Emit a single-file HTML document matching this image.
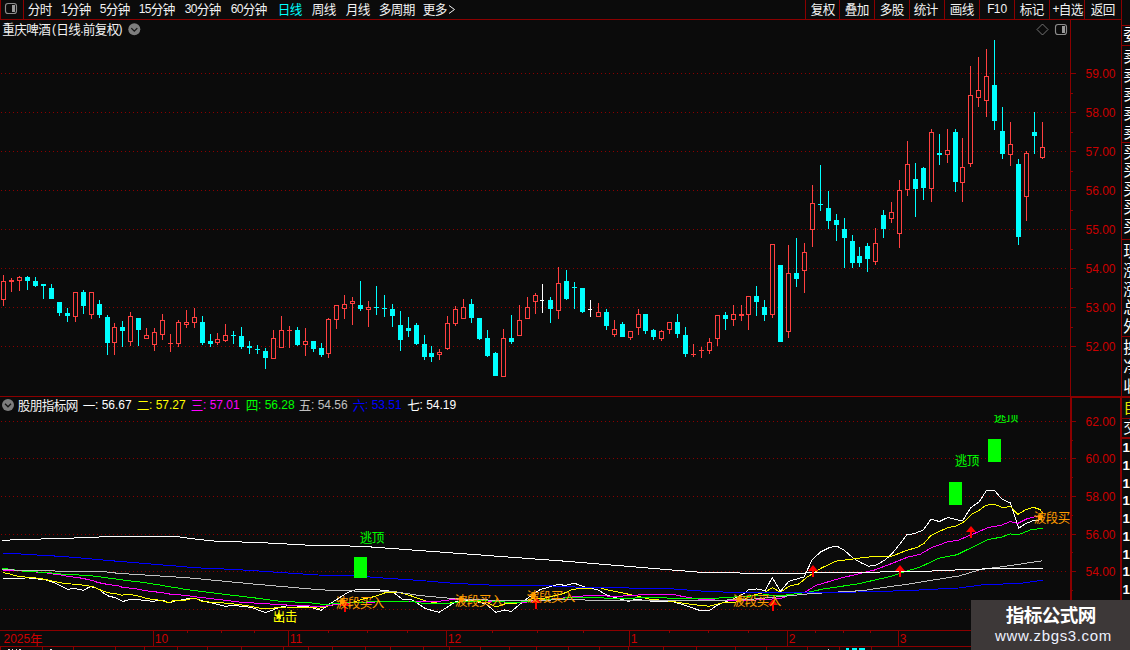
<!DOCTYPE html>
<html lang="zh"><head><meta charset="utf-8"><title>重庆啤酒 日线</title>
<style>
html,body{margin:0;padding:0;background:#0b0b0b;}
body{width:1130px;height:650px;overflow:hidden;font-family:"Liberation Sans","Noto Sans CJK SC",sans-serif;}
svg{display:block;font-family:"Liberation Sans","Noto Sans CJK SC",sans-serif;}
</style></head><body>
<svg role="img" aria-label="重庆啤酒 日线 K线图" width="1130" height="650" viewBox="0 0 1130 650" shape-rendering="crispEdges">
<defs>
<clipPath id="cpInd"><rect x="0" y="415" width="1070" height="215"/></clipPath>
<clipPath id="cpStrip"><rect x="1122" y="0" width="8" height="650"/></clipPath>
</defs>
<rect x="0" y="0" width="1130" height="650" fill="#0b0b0b"/>
<line x1="1" y1="73.5" x2="1066" y2="73.5" stroke="#8b0000" stroke-width="1" stroke-dasharray="1 3"/>
<line x1="1" y1="112.5" x2="1066" y2="112.5" stroke="#8b0000" stroke-width="1" stroke-dasharray="1 3"/>
<line x1="1" y1="151.5" x2="1066" y2="151.5" stroke="#8b0000" stroke-width="1" stroke-dasharray="1 3"/>
<line x1="1" y1="190.5" x2="1066" y2="190.5" stroke="#8b0000" stroke-width="1" stroke-dasharray="1 3"/>
<line x1="1" y1="229.5" x2="1066" y2="229.5" stroke="#8b0000" stroke-width="1" stroke-dasharray="1 3"/>
<line x1="1" y1="268.5" x2="1066" y2="268.5" stroke="#8b0000" stroke-width="1" stroke-dasharray="1 3"/>
<line x1="1" y1="307.5" x2="1066" y2="307.5" stroke="#8b0000" stroke-width="1" stroke-dasharray="1 3"/>
<line x1="1" y1="346.5" x2="1066" y2="346.5" stroke="#8b0000" stroke-width="1" stroke-dasharray="1 3"/>
<line x1="1" y1="421.5" x2="1066" y2="421.5" stroke="#8b0000" stroke-width="1" stroke-dasharray="1 3"/>
<line x1="1" y1="458.5" x2="1066" y2="458.5" stroke="#8b0000" stroke-width="1" stroke-dasharray="1 3"/>
<line x1="1" y1="496.5" x2="1066" y2="496.5" stroke="#8b0000" stroke-width="1" stroke-dasharray="1 3"/>
<line x1="1" y1="534.5" x2="1066" y2="534.5" stroke="#8b0000" stroke-width="1" stroke-dasharray="1 3"/>
<line x1="1" y1="571.5" x2="1066" y2="571.5" stroke="#8b0000" stroke-width="1" stroke-dasharray="1 3"/>
<line x1="1" y1="609.5" x2="1066" y2="609.5" stroke="#8b0000" stroke-width="1" stroke-dasharray="1 3"/>
<g id="candles">
<rect x="3" y="275" width="1" height="6" fill="#ff4040"/>
<rect x="3" y="300" width="1" height="6" fill="#ff4040"/>
<rect x="1.5" y="281.5" width="4" height="18" fill="#0b0b0b" stroke="#ff4040" stroke-width="1"/>
<rect x="11" y="278" width="1" height="14" fill="#ff4040"/>
<rect x="9" y="280" width="5" height="2" fill="#ff4040"/>
<rect x="19" y="276" width="1" height="1" fill="#ff4040"/>
<rect x="19" y="281" width="1" height="10" fill="#ff4040"/>
<rect x="17.5" y="277.5" width="4" height="3" fill="#0b0b0b" stroke="#ff4040" stroke-width="1"/>
<rect x="27" y="276" width="1" height="14" fill="#00ffff"/>
<rect x="25" y="277" width="5" height="4" fill="#00ffff"/>
<rect x="35" y="277" width="1" height="10" fill="#00ffff"/>
<rect x="33" y="281" width="5" height="5" fill="#00ffff"/>
<rect x="43" y="284" width="1" height="15" fill="#00ffff"/>
<rect x="41" y="284" width="5" height="2" fill="#00ffff"/>
<rect x="51" y="284" width="1" height="15" fill="#00ffff"/>
<rect x="49" y="288" width="5" height="11" fill="#00ffff"/>
<rect x="59" y="302" width="1" height="14" fill="#00ffff"/>
<rect x="57" y="302" width="5" height="11" fill="#00ffff"/>
<rect x="67" y="308" width="1" height="14" fill="#00ffff"/>
<rect x="65" y="313" width="5" height="3" fill="#00ffff"/>
<rect x="75" y="317" width="1" height="5" fill="#ff4040"/>
<rect x="73.5" y="292.5" width="4" height="24" fill="#0b0b0b" stroke="#ff4040" stroke-width="1"/>
<rect x="83" y="290" width="1" height="24" fill="#00ffff"/>
<rect x="81" y="292" width="5" height="14" fill="#00ffff"/>
<rect x="91" y="315" width="1" height="4" fill="#ff4040"/>
<rect x="89.5" y="292.5" width="4" height="22" fill="#0b0b0b" stroke="#ff4040" stroke-width="1"/>
<rect x="99" y="300" width="1" height="18" fill="#00ffff"/>
<rect x="97" y="304" width="5" height="11" fill="#00ffff"/>
<rect x="107" y="315" width="1" height="40" fill="#00ffff"/>
<rect x="105" y="317" width="5" height="26" fill="#00ffff"/>
<rect x="114" y="323" width="1" height="4" fill="#ff4040"/>
<rect x="114" y="343" width="1" height="12" fill="#ff4040"/>
<rect x="112.5" y="327.5" width="4" height="15" fill="#0b0b0b" stroke="#ff4040" stroke-width="1"/>
<rect x="122" y="321" width="1" height="26" fill="#00ffff"/>
<rect x="120" y="327" width="5" height="4" fill="#00ffff"/>
<rect x="130" y="312" width="1" height="4" fill="#ff4040"/>
<rect x="130" y="342" width="1" height="4" fill="#ff4040"/>
<rect x="128.5" y="316.5" width="4" height="25" fill="#0b0b0b" stroke="#ff4040" stroke-width="1"/>
<rect x="138" y="318" width="1" height="28" fill="#00ffff"/>
<rect x="136" y="318" width="5" height="12" fill="#00ffff"/>
<rect x="146" y="328" width="1" height="7" fill="#ff4040"/>
<rect x="144.5" y="335.5" width="4" height="3" fill="#0b0b0b" stroke="#ff4040" stroke-width="1"/>
<rect x="154" y="328" width="1" height="4" fill="#ff4040"/>
<rect x="154" y="345" width="1" height="6" fill="#ff4040"/>
<rect x="152.5" y="332.5" width="4" height="12" fill="#0b0b0b" stroke="#ff4040" stroke-width="1"/>
<rect x="162" y="314" width="1" height="6" fill="#ff4040"/>
<rect x="162" y="335" width="1" height="5" fill="#ff4040"/>
<rect x="160.5" y="320.5" width="4" height="14" fill="#0b0b0b" stroke="#ff4040" stroke-width="1"/>
<rect x="170" y="334" width="1" height="18" fill="#ff4040"/>
<rect x="168" y="343" width="5" height="1" fill="#ff4040"/>
<rect x="178" y="320" width="1" height="2" fill="#ff4040"/>
<rect x="178" y="344" width="1" height="3" fill="#ff4040"/>
<rect x="176.5" y="322.5" width="4" height="21" fill="#0b0b0b" stroke="#ff4040" stroke-width="1"/>
<rect x="186" y="310" width="1" height="12" fill="#ff4040"/>
<rect x="186" y="325" width="1" height="3" fill="#ff4040"/>
<rect x="184.5" y="322.5" width="4" height="2" fill="#0b0b0b" stroke="#ff4040" stroke-width="1"/>
<rect x="194" y="308" width="1" height="9" fill="#ff4040"/>
<rect x="194" y="323" width="1" height="5" fill="#ff4040"/>
<rect x="192.5" y="317.5" width="4" height="5" fill="#0b0b0b" stroke="#ff4040" stroke-width="1"/>
<rect x="202" y="316" width="1" height="29" fill="#00ffff"/>
<rect x="200" y="322" width="5" height="21" fill="#00ffff"/>
<rect x="210" y="334" width="1" height="13" fill="#00ffff"/>
<rect x="208" y="341" width="5" height="3" fill="#00ffff"/>
<rect x="217" y="333" width="1" height="6" fill="#ff4040"/>
<rect x="217" y="343" width="1" height="2" fill="#ff4040"/>
<rect x="215.5" y="339.5" width="4" height="3" fill="#0b0b0b" stroke="#ff4040" stroke-width="1"/>
<rect x="225" y="324" width="1" height="11" fill="#ff4040"/>
<rect x="225" y="341" width="1" height="1" fill="#ff4040"/>
<rect x="223.5" y="335.5" width="4" height="5" fill="#0b0b0b" stroke="#ff4040" stroke-width="1"/>
<rect x="233" y="331" width="1" height="13" fill="#00ffff"/>
<rect x="231" y="335" width="5" height="1" fill="#00ffff"/>
<rect x="241" y="327" width="1" height="22" fill="#00ffff"/>
<rect x="239" y="336" width="5" height="11" fill="#00ffff"/>
<rect x="249" y="341" width="1" height="13" fill="#00ffff"/>
<rect x="247" y="346" width="5" height="2" fill="#00ffff"/>
<rect x="257" y="345" width="1" height="9" fill="#00ffff"/>
<rect x="255" y="349" width="5" height="1" fill="#00ffff"/>
<rect x="265" y="348" width="1" height="21" fill="#00ffff"/>
<rect x="263" y="351" width="5" height="7" fill="#00ffff"/>
<rect x="273" y="330" width="1" height="8" fill="#ff4040"/>
<rect x="271.5" y="338.5" width="4" height="20" fill="#0b0b0b" stroke="#ff4040" stroke-width="1"/>
<rect x="281" y="316" width="1" height="14" fill="#ff4040"/>
<rect x="279.5" y="330.5" width="4" height="17" fill="#0b0b0b" stroke="#ff4040" stroke-width="1"/>
<rect x="289" y="326" width="1" height="22" fill="#ff4040"/>
<rect x="287" y="330" width="5" height="1" fill="#ff4040"/>
<rect x="297" y="327" width="1" height="19" fill="#00ffff"/>
<rect x="295" y="330" width="5" height="15" fill="#00ffff"/>
<rect x="305" y="328" width="1" height="13" fill="#ff4040"/>
<rect x="305" y="345" width="1" height="11" fill="#ff4040"/>
<rect x="303.5" y="341.5" width="4" height="3" fill="#0b0b0b" stroke="#ff4040" stroke-width="1"/>
<rect x="313" y="341" width="1" height="11" fill="#00ffff"/>
<rect x="311" y="341" width="5" height="8" fill="#00ffff"/>
<rect x="321" y="343" width="1" height="14" fill="#00ffff"/>
<rect x="319" y="348" width="5" height="7" fill="#00ffff"/>
<rect x="328" y="318" width="1" height="1" fill="#ff4040"/>
<rect x="328" y="354" width="1" height="4" fill="#ff4040"/>
<rect x="326.5" y="319.5" width="4" height="34" fill="#0b0b0b" stroke="#ff4040" stroke-width="1"/>
<rect x="336" y="320" width="1" height="9" fill="#ff4040"/>
<rect x="334.5" y="305.5" width="4" height="14" fill="#0b0b0b" stroke="#ff4040" stroke-width="1"/>
<rect x="344" y="295" width="1" height="9" fill="#ff4040"/>
<rect x="344" y="309" width="1" height="10" fill="#ff4040"/>
<rect x="342.5" y="304.5" width="4" height="4" fill="#0b0b0b" stroke="#ff4040" stroke-width="1"/>
<rect x="352" y="297" width="1" height="4" fill="#ff4040"/>
<rect x="352" y="304" width="1" height="21" fill="#ff4040"/>
<rect x="350.5" y="301.5" width="4" height="2" fill="#0b0b0b" stroke="#ff4040" stroke-width="1"/>
<rect x="360" y="281" width="1" height="30" fill="#00ffff"/>
<rect x="358" y="305" width="5" height="4" fill="#00ffff"/>
<rect x="368" y="301" width="1" height="6" fill="#ff4040"/>
<rect x="368" y="310" width="1" height="17" fill="#ff4040"/>
<rect x="366.5" y="307.5" width="4" height="2" fill="#0b0b0b" stroke="#ff4040" stroke-width="1"/>
<rect x="376" y="286" width="1" height="29" fill="#00ffff"/>
<rect x="374" y="307" width="5" height="1" fill="#00ffff"/>
<rect x="384" y="295" width="1" height="22" fill="#00ffff"/>
<rect x="382" y="308" width="5" height="1" fill="#00ffff"/>
<rect x="392" y="304" width="1" height="23" fill="#00ffff"/>
<rect x="390" y="309" width="5" height="7" fill="#00ffff"/>
<rect x="400" y="311" width="1" height="40" fill="#00ffff"/>
<rect x="398" y="325" width="5" height="15" fill="#00ffff"/>
<rect x="408" y="317" width="1" height="20" fill="#00ffff"/>
<rect x="406" y="328" width="5" height="3" fill="#00ffff"/>
<rect x="416" y="323" width="1" height="22" fill="#00ffff"/>
<rect x="414" y="325" width="5" height="19" fill="#00ffff"/>
<rect x="424" y="335" width="1" height="25" fill="#00ffff"/>
<rect x="422" y="344" width="5" height="13" fill="#00ffff"/>
<rect x="431" y="346" width="1" height="16" fill="#00ffff"/>
<rect x="429" y="353" width="5" height="4" fill="#00ffff"/>
<rect x="439" y="349" width="1" height="3" fill="#ff4040"/>
<rect x="439" y="355" width="1" height="5" fill="#ff4040"/>
<rect x="437.5" y="352.5" width="4" height="2" fill="#0b0b0b" stroke="#ff4040" stroke-width="1"/>
<rect x="447" y="316" width="1" height="7" fill="#ff4040"/>
<rect x="447" y="349" width="1" height="1" fill="#ff4040"/>
<rect x="445.5" y="323.5" width="4" height="25" fill="#0b0b0b" stroke="#ff4040" stroke-width="1"/>
<rect x="455" y="306" width="1" height="3" fill="#ff4040"/>
<rect x="455" y="324" width="1" height="2" fill="#ff4040"/>
<rect x="453.5" y="309.5" width="4" height="14" fill="#0b0b0b" stroke="#ff4040" stroke-width="1"/>
<rect x="463" y="299" width="1" height="8" fill="#ff4040"/>
<rect x="461.5" y="307.5" width="4" height="11" fill="#0b0b0b" stroke="#ff4040" stroke-width="1"/>
<rect x="471" y="299" width="1" height="24" fill="#00ffff"/>
<rect x="469" y="304" width="5" height="14" fill="#00ffff"/>
<rect x="479" y="318" width="1" height="22" fill="#00ffff"/>
<rect x="477" y="318" width="5" height="21" fill="#00ffff"/>
<rect x="487" y="330" width="1" height="27" fill="#00ffff"/>
<rect x="485" y="338" width="5" height="18" fill="#00ffff"/>
<rect x="495" y="352" width="1" height="24" fill="#00ffff"/>
<rect x="493" y="353" width="5" height="23" fill="#00ffff"/>
<rect x="503" y="329" width="1" height="9" fill="#ff4040"/>
<rect x="501.5" y="338.5" width="4" height="38" fill="#0b0b0b" stroke="#ff4040" stroke-width="1"/>
<rect x="511" y="315" width="1" height="29" fill="#00ffff"/>
<rect x="509" y="338" width="5" height="4" fill="#00ffff"/>
<rect x="519" y="305" width="1" height="15" fill="#ff4040"/>
<rect x="517.5" y="320.5" width="4" height="15" fill="#0b0b0b" stroke="#ff4040" stroke-width="1"/>
<rect x="527" y="297" width="1" height="10" fill="#ff4040"/>
<rect x="525.5" y="307.5" width="4" height="11" fill="#0b0b0b" stroke="#ff4040" stroke-width="1"/>
<rect x="535" y="293" width="1" height="2" fill="#ff4040"/>
<rect x="535" y="302" width="1" height="12" fill="#ff4040"/>
<rect x="533.5" y="295.5" width="4" height="6" fill="#0b0b0b" stroke="#ff4040" stroke-width="1"/>
<rect x="542" y="284" width="1" height="29" fill="#ffffff"/>
<rect x="540" y="300" width="4" height="1" fill="#ffffff"/>
<rect x="550" y="297" width="1" height="26" fill="#00ffff"/>
<rect x="548" y="300" width="5" height="9" fill="#00ffff"/>
<rect x="558" y="267" width="1" height="16" fill="#ff4040"/>
<rect x="558" y="311" width="1" height="8" fill="#ff4040"/>
<rect x="556.5" y="283.5" width="4" height="27" fill="#0b0b0b" stroke="#ff4040" stroke-width="1"/>
<rect x="566" y="270" width="1" height="30" fill="#00ffff"/>
<rect x="564" y="281" width="5" height="18" fill="#00ffff"/>
<rect x="574" y="282" width="1" height="27" fill="#00ffff"/>
<rect x="572" y="287" width="5" height="1" fill="#00ffff"/>
<rect x="582" y="288" width="1" height="25" fill="#00ffff"/>
<rect x="580" y="288" width="5" height="24" fill="#00ffff"/>
<rect x="590" y="300" width="1" height="17" fill="#ffffff"/>
<rect x="588" y="309" width="4" height="1" fill="#ffffff"/>
<rect x="598" y="303" width="1" height="9" fill="#ff4040"/>
<rect x="596.5" y="312.5" width="4" height="4" fill="#0b0b0b" stroke="#ff4040" stroke-width="1"/>
<rect x="606" y="309" width="1" height="21" fill="#00ffff"/>
<rect x="604" y="312" width="5" height="14" fill="#00ffff"/>
<rect x="614" y="320" width="1" height="9" fill="#ff4040"/>
<rect x="614" y="335" width="1" height="2" fill="#ff4040"/>
<rect x="612.5" y="329.5" width="4" height="5" fill="#0b0b0b" stroke="#ff4040" stroke-width="1"/>
<rect x="622" y="322" width="1" height="15" fill="#00ffff"/>
<rect x="620" y="324" width="5" height="13" fill="#00ffff"/>
<rect x="630" y="338" width="1" height="2" fill="#ff4040"/>
<rect x="628.5" y="331.5" width="4" height="6" fill="#0b0b0b" stroke="#ff4040" stroke-width="1"/>
<rect x="638" y="309" width="1" height="5" fill="#ff4040"/>
<rect x="638" y="328" width="1" height="7" fill="#ff4040"/>
<rect x="636.5" y="314.5" width="4" height="13" fill="#0b0b0b" stroke="#ff4040" stroke-width="1"/>
<rect x="645" y="314" width="1" height="20" fill="#00ffff"/>
<rect x="643" y="314" width="5" height="17" fill="#00ffff"/>
<rect x="653" y="329" width="1" height="11" fill="#00ffff"/>
<rect x="651" y="330" width="5" height="7" fill="#00ffff"/>
<rect x="661" y="330" width="1" height="1" fill="#ff4040"/>
<rect x="661" y="339" width="1" height="2" fill="#ff4040"/>
<rect x="659.5" y="331.5" width="4" height="7" fill="#0b0b0b" stroke="#ff4040" stroke-width="1"/>
<rect x="669" y="330" width="1" height="4" fill="#ff4040"/>
<rect x="667.5" y="322.5" width="4" height="7" fill="#0b0b0b" stroke="#ff4040" stroke-width="1"/>
<rect x="677" y="314" width="1" height="24" fill="#00ffff"/>
<rect x="675" y="322" width="5" height="12" fill="#00ffff"/>
<rect x="685" y="327" width="1" height="30" fill="#00ffff"/>
<rect x="683" y="335" width="5" height="19" fill="#00ffff"/>
<rect x="693" y="344" width="1" height="13" fill="#ff4040"/>
<rect x="691" y="354" width="5" height="1" fill="#ff4040"/>
<rect x="701" y="347" width="1" height="11" fill="#ff4040"/>
<rect x="699" y="350" width="5" height="1" fill="#ff4040"/>
<rect x="709" y="338" width="1" height="4" fill="#ff4040"/>
<rect x="709" y="351" width="1" height="3" fill="#ff4040"/>
<rect x="707.5" y="342.5" width="4" height="8" fill="#0b0b0b" stroke="#ff4040" stroke-width="1"/>
<rect x="717" y="339" width="1" height="7" fill="#ff4040"/>
<rect x="715.5" y="315.5" width="4" height="23" fill="#0b0b0b" stroke="#ff4040" stroke-width="1"/>
<rect x="725" y="312" width="1" height="18" fill="#00ffff"/>
<rect x="723" y="315" width="5" height="4" fill="#00ffff"/>
<rect x="733" y="305" width="1" height="9" fill="#ff4040"/>
<rect x="733" y="320" width="1" height="6" fill="#ff4040"/>
<rect x="731.5" y="314.5" width="4" height="5" fill="#0b0b0b" stroke="#ff4040" stroke-width="1"/>
<rect x="741" y="305" width="1" height="16" fill="#ff4040"/>
<rect x="739" y="314" width="5" height="2" fill="#ff4040"/>
<rect x="748" y="315" width="1" height="15" fill="#ff4040"/>
<rect x="746.5" y="296.5" width="4" height="18" fill="#0b0b0b" stroke="#ff4040" stroke-width="1"/>
<rect x="756" y="286" width="1" height="30" fill="#00ffff"/>
<rect x="754" y="296" width="5" height="6" fill="#00ffff"/>
<rect x="764" y="300" width="1" height="21" fill="#00ffff"/>
<rect x="762" y="307" width="5" height="8" fill="#00ffff"/>
<rect x="772" y="315" width="1" height="3" fill="#ff4040"/>
<rect x="770.5" y="244.5" width="4" height="70" fill="#0b0b0b" stroke="#ff4040" stroke-width="1"/>
<rect x="780" y="265" width="1" height="77" fill="#00ffff"/>
<rect x="778" y="265" width="5" height="77" fill="#00ffff"/>
<rect x="788" y="245" width="1" height="28" fill="#ff4040"/>
<rect x="788" y="332" width="1" height="6" fill="#ff4040"/>
<rect x="786.5" y="273.5" width="4" height="58" fill="#0b0b0b" stroke="#ff4040" stroke-width="1"/>
<rect x="796" y="238" width="1" height="49" fill="#00ffff"/>
<rect x="794" y="273" width="5" height="6" fill="#00ffff"/>
<rect x="804" y="243" width="1" height="9" fill="#ff4040"/>
<rect x="804" y="271" width="1" height="22" fill="#ff4040"/>
<rect x="802.5" y="252.5" width="4" height="18" fill="#0b0b0b" stroke="#ff4040" stroke-width="1"/>
<rect x="812" y="185" width="1" height="18" fill="#ff4040"/>
<rect x="812" y="230" width="1" height="17" fill="#ff4040"/>
<rect x="810.5" y="203.5" width="4" height="26" fill="#0b0b0b" stroke="#ff4040" stroke-width="1"/>
<rect x="820" y="165" width="1" height="46" fill="#00ffff"/>
<rect x="818" y="204" width="5" height="1" fill="#00ffff"/>
<rect x="828" y="191" width="1" height="38" fill="#00ffff"/>
<rect x="826" y="208" width="5" height="13" fill="#00ffff"/>
<rect x="836" y="214" width="1" height="27" fill="#00ffff"/>
<rect x="834" y="220" width="5" height="5" fill="#00ffff"/>
<rect x="844" y="218" width="1" height="50" fill="#00ffff"/>
<rect x="842" y="229" width="5" height="9" fill="#00ffff"/>
<rect x="852" y="235" width="1" height="33" fill="#00ffff"/>
<rect x="850" y="241" width="5" height="22" fill="#00ffff"/>
<rect x="859" y="247" width="1" height="20" fill="#00ffff"/>
<rect x="857" y="256" width="5" height="7" fill="#00ffff"/>
<rect x="867" y="243" width="1" height="29" fill="#00ffff"/>
<rect x="865" y="246" width="5" height="13" fill="#00ffff"/>
<rect x="875" y="228" width="1" height="15" fill="#ff4040"/>
<rect x="875" y="262" width="1" height="3" fill="#ff4040"/>
<rect x="873.5" y="243.5" width="4" height="18" fill="#0b0b0b" stroke="#ff4040" stroke-width="1"/>
<rect x="883" y="210" width="1" height="28" fill="#00ffff"/>
<rect x="881" y="215" width="5" height="14" fill="#00ffff"/>
<rect x="891" y="202" width="1" height="10" fill="#ff4040"/>
<rect x="891" y="219" width="1" height="4" fill="#ff4040"/>
<rect x="889.5" y="212.5" width="4" height="6" fill="#0b0b0b" stroke="#ff4040" stroke-width="1"/>
<rect x="899" y="180" width="1" height="10" fill="#ff4040"/>
<rect x="899" y="234" width="1" height="14" fill="#ff4040"/>
<rect x="897.5" y="190.5" width="4" height="43" fill="#0b0b0b" stroke="#ff4040" stroke-width="1"/>
<rect x="907" y="141" width="1" height="23" fill="#ff4040"/>
<rect x="907" y="190" width="1" height="6" fill="#ff4040"/>
<rect x="905.5" y="164.5" width="4" height="25" fill="#0b0b0b" stroke="#ff4040" stroke-width="1"/>
<rect x="915" y="163" width="1" height="54" fill="#00ffff"/>
<rect x="913" y="179" width="5" height="10" fill="#00ffff"/>
<rect x="923" y="167" width="1" height="33" fill="#00ffff"/>
<rect x="921" y="168" width="5" height="20" fill="#00ffff"/>
<rect x="931" y="129" width="1" height="3" fill="#ff4040"/>
<rect x="931" y="189" width="1" height="13" fill="#ff4040"/>
<rect x="929.5" y="132.5" width="4" height="56" fill="#0b0b0b" stroke="#ff4040" stroke-width="1"/>
<rect x="939" y="134" width="1" height="31" fill="#00ffff"/>
<rect x="937" y="153" width="5" height="2" fill="#00ffff"/>
<rect x="947" y="129" width="1" height="21" fill="#ff4040"/>
<rect x="947" y="155" width="1" height="8" fill="#ff4040"/>
<rect x="945.5" y="150.5" width="4" height="4" fill="#0b0b0b" stroke="#ff4040" stroke-width="1"/>
<rect x="955" y="129" width="1" height="63" fill="#00ffff"/>
<rect x="953" y="132" width="5" height="50" fill="#00ffff"/>
<rect x="962" y="138" width="1" height="29" fill="#ff4040"/>
<rect x="962" y="183" width="1" height="19" fill="#ff4040"/>
<rect x="960.5" y="167.5" width="4" height="15" fill="#0b0b0b" stroke="#ff4040" stroke-width="1"/>
<rect x="970" y="66" width="1" height="29" fill="#ff4040"/>
<rect x="970" y="164" width="1" height="3" fill="#ff4040"/>
<rect x="968.5" y="95.5" width="4" height="68" fill="#0b0b0b" stroke="#ff4040" stroke-width="1"/>
<rect x="978" y="57" width="1" height="33" fill="#ff4040"/>
<rect x="978" y="98" width="1" height="9" fill="#ff4040"/>
<rect x="976.5" y="90.5" width="4" height="7" fill="#0b0b0b" stroke="#ff4040" stroke-width="1"/>
<rect x="986" y="49" width="1" height="27" fill="#ff4040"/>
<rect x="986" y="101" width="1" height="16" fill="#ff4040"/>
<rect x="984.5" y="76.5" width="4" height="24" fill="#0b0b0b" stroke="#ff4040" stroke-width="1"/>
<rect x="994" y="40" width="1" height="90" fill="#00ffff"/>
<rect x="992" y="85" width="5" height="36" fill="#00ffff"/>
<rect x="1002" y="107" width="1" height="52" fill="#00ffff"/>
<rect x="1000" y="131" width="5" height="23" fill="#00ffff"/>
<rect x="1010" y="122" width="1" height="22" fill="#ff4040"/>
<rect x="1010" y="155" width="1" height="11" fill="#ff4040"/>
<rect x="1008.5" y="144.5" width="4" height="10" fill="#0b0b0b" stroke="#ff4040" stroke-width="1"/>
<rect x="1018" y="159" width="1" height="86" fill="#00ffff"/>
<rect x="1016" y="164" width="5" height="73" fill="#00ffff"/>
<rect x="1026" y="151" width="1" height="2" fill="#ff4040"/>
<rect x="1026" y="197" width="1" height="24" fill="#ff4040"/>
<rect x="1024.5" y="153.5" width="4" height="43" fill="#0b0b0b" stroke="#ff4040" stroke-width="1"/>
<rect x="1034" y="112" width="1" height="42" fill="#00ffff"/>
<rect x="1032" y="132" width="5" height="4" fill="#00ffff"/>
<rect x="1042" y="122" width="1" height="25" fill="#ff4040"/>
<rect x="1042" y="158" width="1" height="1" fill="#ff4040"/>
<rect x="1040.5" y="147.5" width="4" height="10" fill="#0b0b0b" stroke="#ff4040" stroke-width="1"/>
</g>
<g id="indicator" clip-path="url(#cpInd)">
<polyline points="3.0,578.5 22.7,578.5 27.0,577.5 32.0,578.5 45.4,579.6 51.0,581.7 56.0,583.5 60.0,585.5 63.5,587.2 68.0,589.4 74.0,588.4 79.5,589.4 83.0,590.4 86.0,588.9 90.0,586.7 95.0,587.5 99.0,589.4 102.0,591.9 105.5,594.3 109.0,596.3 114.0,597.3 118.0,599.0 121.0,600.3 123.0,601.7 126.0,600.3 134.0,599.2 143.0,600.2 152.0,601.3 163.0,600.3 170.0,603.0 174.5,601.0 179.5,600.2 185.0,599.2 191.7,598.3 196.8,599.0 201.8,600.7 215.0,603.7 225.4,606.5 230.4,605.4 245.5,606.5 252.0,607.7 265.0,612.4 269.0,611.6 279.0,607.4 289.0,605.4 309.4,607.0 321.0,610.4 325.4,607.0 329.6,604.0 348.0,592.3 356.5,589.4 375.0,589.4 392.0,591.4 402.0,599.0 412.0,599.8 425.5,608.6 439.0,612.4 450.7,604.9 455.8,601.5 470.0,600.0 486.0,604.0 496.0,612.4 504.5,610.0 511.0,611.6 526.4,599.0 540.0,589.7 555.0,585.2 558.4,584.2 565.0,585.5 574.3,583.3 580.0,585.2 588.6,588.4 597.0,589.4 605.4,594.3 613.9,597.3 629.0,601.5 635.7,599.0 649.0,601.0 672.7,601.5 686.0,605.7 699.6,610.4 709.7,610.4 716.4,605.7 723.0,602.7 733.0,599.0 745.0,593.0 748.4,589.7 756.8,588.9 765.0,590.6 772.3,577.5 780.4,591.4 788.8,581.3 804.0,577.0 812.3,559.5 820.7,551.9 829.0,547.7 836.7,546.0 844.3,550.2 852.7,557.8 861.0,562.8 868.6,566.2 876.2,565.0 884.6,560.3 891.3,554.4 899.7,544.3 906.5,535.0 915.0,533.4 923.3,530.0 931.0,519.3 939.4,521.5 947.7,517.5 962.4,521.0 970.7,507.7 979.0,502.0 986.4,490.7 994.7,490.7 1001.2,498.5 1010.4,503.0 1018.7,528.3 1026.0,523.4 1033.5,520.6 1042.0,519.7" fill="none" stroke="#ffffff" stroke-width="1" stroke-linejoin="round" stroke-linecap="square"/>
<polyline points="3.0,572.6 7.5,573.4 11.0,574.4 14.3,575.4 18.5,576.5 32.0,577.5 40.0,578.5 45.4,579.6 50.0,580.5 54.6,581.5 59.0,582.5 64.7,583.5 78.0,584.5 83.0,585.2 92.5,586.5 97.5,588.6 101.7,590.6 106.8,592.3 111.8,593.3 118.5,594.3 122.0,595.3 126.0,594.3 135.4,595.3 140.4,596.6 145.5,598.3 152.0,599.3 160.0,600.3 166.5,602.0 170.2,603.0 172.4,601.0 177.4,600.2 185.0,600.2 191.7,598.6 196.8,599.0 201.8,601.5 227.0,603.2 245.5,605.4 252.0,606.5 264.0,609.0 272.4,608.2 286.0,607.0 309.4,607.4 319.5,608.2 326.0,606.5 336.0,604.4 353.0,602.3 363.0,599.0 375.0,596.5 385.0,592.8 397.0,591.9 410.4,595.6 425.5,601.0 440.6,603.7 454.0,602.7 470.0,601.0 487.7,602.7 496.0,607.0 504.5,604.0 521.0,602.7 531.4,599.0 545.0,598.0 555.0,595.6 561.7,594.3 571.8,589.7 578.5,588.6 600.4,587.6 605.4,589.4 622.0,592.8 639.0,596.5 649.0,599.0 672.7,601.5 682.8,603.2 699.6,605.4 709.7,606.2 723.0,602.7 736.6,602.0 745.0,599.0 750.0,596.0 765.0,592.3 772.3,587.6 780.4,592.3 788.8,586.4 798.9,583.9 807.3,577.0 820.7,568.4 835.8,561.2 849.3,559.5 861.0,557.8 874.5,556.4 891.3,556.4 908.0,549.9 916.6,547.7 923.7,543.7 931.0,535.4 947.7,527.6 957.0,525.8 964.3,521.5 971.7,514.1 979.0,510.4 985.5,505.5 993.8,504.0 1003.0,507.7 1010.4,506.4 1017.8,514.5 1026.0,509.5 1033.5,507.3 1040.0,509.5 1042.0,512.3" fill="none" stroke="#ffff00" stroke-width="1" stroke-linejoin="round" stroke-linecap="square"/>
<polyline points="3.0,570.4 16.0,570.4 46.0,572.8 56.0,574.4 64.0,575.4 67.0,576.5 78.0,577.5 83.0,578.5 88.0,579.5 93.0,580.8 98.0,582.5 103.0,583.5 108.0,584.5 118.5,585.9 122.0,587.2 134.0,588.6 139.0,589.4 144.0,590.4 151.0,591.4 160.0,592.4 166.5,593.4 171.0,594.3 185.0,595.3 196.8,597.0 218.6,599.5 238.8,602.0 264.0,603.7 294.3,605.4 323.0,606.5 333.0,604.9 353.0,602.7 375.0,602.0 412.0,601.0 440.6,601.0 457.4,599.0 474.0,599.0 491.0,601.5 521.0,602.7 538.0,600.7 560.0,598.3 571.8,597.0 587.0,595.6 602.0,595.3 610.5,596.5 634.0,595.6 642.4,594.3 672.7,594.3 682.8,596.5 698.0,599.0 713.0,599.8 723.0,601.0 745.0,600.7 780.4,598.5 792.0,594.3 804.0,592.8 815.7,585.5 841.0,578.0 861.0,573.3 874.5,570.0 891.3,563.7 908.0,557.0 920.0,554.4 931.0,547.9 947.7,541.8 958.8,540.0 988.3,527.6 1001.2,525.2 1010.4,521.5 1017.8,523.4 1027.0,518.8 1038.0,516.0 1042.0,516.0" fill="none" stroke="#ff00ff" stroke-width="1" stroke-linejoin="round" stroke-linecap="square"/>
<polyline points="3.0,568.5 8.0,569.0 17.0,570.4 24.0,571.2 48.0,572.6 56.0,573.4 64.0,574.4 88.0,575.4 97.0,576.5 104.0,577.5 112.0,578.5 119.0,579.5 127.0,580.5 135.0,581.5 144.0,582.5 151.0,583.7 159.0,584.7 167.0,586.5 175.0,587.5 185.0,589.4 218.6,593.6 254.0,597.8 279.0,601.2 309.4,602.7 319.5,604.0 329.6,604.0 353.0,602.7 375.0,601.5 410.0,601.0 422.0,603.2 450.7,603.2 460.8,601.5 487.7,600.7 504.5,602.0 521.0,602.0 538.0,600.3 560.0,598.3 571.8,597.6 602.0,597.3 605.4,598.6 656.0,597.6 682.8,598.6 713.0,599.0 721.5,597.6 745.0,596.5 765.0,594.8 782.0,595.6 807.3,592.3 824.0,588.9 857.7,583.9 891.3,576.3 908.0,570.7 920.0,567.1 938.5,558.4 957.0,554.7 988.3,539.4 1001.2,537.2 1010.4,533.9 1017.8,535.0 1030.7,529.8 1042.0,528.3" fill="none" stroke="#00ff00" stroke-width="1" stroke-linejoin="round" stroke-linecap="square"/>
<polyline points="3.0,569.6 24.0,570.4 64.0,571.2 103.0,571.6 119.0,573.4 135.0,574.4 151.0,575.4 167.0,576.5 185.0,577.5 252.0,583.9 309.4,588.9 333.0,590.6 375.0,591.4 392.0,591.4 420.4,595.6 454.0,598.6 504.5,600.7 538.0,600.7 560.0,599.5 600.0,600.3 700.0,600.3 745.0,599.8 782.0,596.5 807.0,594.0 832.5,592.3 862.7,590.6 891.0,586.4 908.0,584.2 930.0,580.5 958.8,576.0 981.0,569.5 1012.3,565.3 1042.0,560.8" fill="none" stroke="#c0c0c0" stroke-width="1" stroke-linejoin="round" stroke-linecap="square"/>
<polyline points="3.0,553.6 15.0,553.6 30.0,554.6 48.0,555.6 64.0,556.6 88.0,558.6 112.0,560.8 135.0,562.7 159.0,564.7 183.0,566.5 190.0,567.5 237.0,569.6 254.0,570.7 286.0,572.9 318.0,575.0 353.0,575.4 375.0,577.5 420.4,580.5 454.0,583.3 492.8,585.2 546.6,585.2 560.0,586.9 602.0,587.2 642.4,588.4 672.7,588.9 689.5,590.2 706.3,591.4 731.6,592.3 745.0,592.8 807.0,592.6 857.7,592.0 908.0,590.6 930.0,589.4 958.8,588.0 982.7,584.8 1021.5,583.3 1042.0,580.2" fill="none" stroke="#0000ff" stroke-width="1" stroke-linejoin="round" stroke-linecap="square"/>
<polyline points="3.0,540.5 15.0,539.6 63.0,538.5 87.0,537.4 118.0,536.4 175.0,536.4 183.0,537.4 190.0,538.5 213.6,541.0 262.0,542.7 309.0,545.2 350.0,546.0 370.0,546.9 560.0,560.8 698.0,572.1 738.0,572.6 745.0,573.8 800.5,573.8 807.0,572.6 930.0,571.6 934.8,570.4 981.0,569.5 984.6,568.2 1042.0,568.2" fill="none" stroke="#ffffff" stroke-width="1" stroke-linejoin="round" stroke-linecap="square"/>
<rect x="354" y="557" width="13" height="21" fill="#00ff00"/>
<g fill="#00ff00" shape-rendering="geometricPrecision"><title>逃顶</title><text x="359.70 371.70" y="541.76" font-size="12.6">逃顶</text></g>
<rect x="949" y="482" width="13" height="23" fill="#00ff00"/>
<g fill="#00ff00" shape-rendering="geometricPrecision"><title>逃顶</title><text x="954.70 966.70" y="464.76" font-size="12.6">逃顶</text></g>
<rect x="988" y="439" width="13" height="23" fill="#00ff00"/>
<g fill="#00ff00" shape-rendering="geometricPrecision"><title>逃顶</title><text x="993.70 1005.70" y="420.76" font-size="12.6">逃顶</text></g>
<polygon points="345,600 350,606 340,606" fill="#ff0000" shape-rendering="geometricPrecision"/>
<rect x="344" y="606" width="2" height="6" fill="#ff0000"/>
<polygon points="536,597 541,603 531,603" fill="#ff0000" shape-rendering="geometricPrecision"/>
<rect x="535" y="603" width="2" height="6" fill="#ff0000"/>
<polygon points="773,599 778,605 768,605" fill="#ff0000" shape-rendering="geometricPrecision"/>
<rect x="772" y="605" width="2" height="6" fill="#ff0000"/>
<polygon points="813,565 818,571 808,571" fill="#ff0000" shape-rendering="geometricPrecision"/>
<rect x="812" y="571" width="2" height="6" fill="#ff0000"/>
<polygon points="900,565 905,571 895,571" fill="#ff0000" shape-rendering="geometricPrecision"/>
<rect x="899" y="571" width="2" height="6" fill="#ff0000"/>
<polygon points="971,526 976,532 966,532" fill="#ff0000" shape-rendering="geometricPrecision"/>
<rect x="970" y="532" width="2" height="6" fill="#ff0000"/>
<polygon points="342.20,597.40 343.45,599.78 346.10,600.23 344.23,602.16 344.61,604.82 342.20,603.63 339.79,604.82 340.17,602.16 338.30,600.23 340.95,599.78" fill="#ff9c00" shape-rendering="geometricPrecision"/>
<g fill="#ff9c00" shape-rendering="geometricPrecision"><title>波段买入</title><text x="335.70 347.70 359.70 371.70" y="606.76" font-size="12.6">波段买入</text></g>
<polygon points="461.20,595.40 462.45,597.78 465.10,598.23 463.23,600.16 463.61,602.82 461.20,601.63 458.79,602.82 459.17,600.16 457.30,598.23 459.95,597.78" fill="#ff9c00" shape-rendering="geometricPrecision"/>
<g fill="#ff9c00" shape-rendering="geometricPrecision"><title>波段买入</title><text x="454.70 466.70 478.70 490.70" y="604.76" font-size="12.6">波段买入</text></g>
<polygon points="533.20,591.40 534.45,593.78 537.10,594.23 535.23,596.16 535.61,598.82 533.20,597.63 530.79,598.82 531.17,596.16 529.30,594.23 531.95,593.78" fill="#ff9c00" shape-rendering="geometricPrecision"/>
<g fill="#ff9c00" shape-rendering="geometricPrecision"><title>波段买入</title><text x="526.70 538.70 550.70 562.70" y="600.76" font-size="12.6">波段买入</text></g>
<polygon points="739.20,595.40 740.45,597.78 743.10,598.23 741.23,600.16 741.61,602.82 739.20,601.63 736.79,602.82 737.17,600.16 735.30,598.23 737.95,597.78" fill="#ff9c00" shape-rendering="geometricPrecision"/>
<g fill="#ff9c00" shape-rendering="geometricPrecision"><title>波段买入</title><text x="732.70 744.70 756.70 768.70" y="604.76" font-size="12.6">波段买入</text></g>
<polygon points="1040.20,512.90 1041.45,515.28 1044.10,515.73 1042.23,517.66 1042.61,520.32 1040.20,519.13 1037.79,520.32 1038.17,517.66 1036.30,515.73 1038.95,515.28" fill="#ff9c00" shape-rendering="geometricPrecision"/>
<g fill="#ff9c00" shape-rendering="geometricPrecision"><title>波段买入</title><text x="1033.70 1045.70 1057.70 1069.70" y="522.26" font-size="12.6">波段买入</text></g>
<polygon points="278.70,612.00 279.95,614.38 282.60,614.83 280.73,616.76 281.11,619.42 278.70,618.23 276.29,619.42 276.67,616.76 274.80,614.83 277.45,614.38" fill="#ffff00" shape-rendering="geometricPrecision"/>
<g fill="#ffff00" shape-rendering="geometricPrecision"><title>出击</title><text x="272.70 284.70" y="620.76" font-size="12.6">出击</text></g>
</g>
<rect x="0" y="19" width="1122" height="1" fill="#8b0000"/>
<rect x="0" y="0" width="1" height="20" fill="#8b0000"/>
<rect x="23" y="0" width="1" height="20" fill="#8b0000"/>
<rect x="805" y="0" width="1" height="20" fill="#8b0000"/>
<rect x="839" y="0" width="1" height="20" fill="#8b0000"/>
<rect x="874" y="0" width="1" height="20" fill="#8b0000"/>
<rect x="909" y="0" width="1" height="20" fill="#8b0000"/>
<rect x="944" y="0" width="1" height="20" fill="#8b0000"/>
<rect x="979" y="0" width="1" height="20" fill="#8b0000"/>
<rect x="1014" y="0" width="1" height="20" fill="#8b0000"/>
<rect x="1049" y="0" width="1" height="20" fill="#8b0000"/>
<rect x="1084" y="0" width="1" height="20" fill="#8b0000"/>
<rect x="1121" y="0" width="1" height="397" fill="#8b0000"/>
<rect x="5.5" y="3.5" width="11" height="10" rx="2.5" ry="2.5" fill="none" stroke="#8c8c8c" stroke-width="1.15" shape-rendering="geometricPrecision"/>
<rect x="12" y="5" width="3" height="7" fill="#9a9a9a"/>
<rect x="1055.5" y="24.5" width="11" height="10" rx="2.5" ry="2.5" fill="none" stroke="#8c8c8c" stroke-width="1.15" shape-rendering="geometricPrecision"/>
<rect x="1062" y="26" width="3" height="7" fill="#9a9a9a"/>
<polygon points="1042.5,24 1048,29.5 1042.5,35 1037,29.5" fill="none" stroke="#858585" stroke-width="0.85" shape-rendering="geometricPrecision"/>
<g fill="#f2f2f2" shape-rendering="geometricPrecision"><title>分时</title><text x="27.70 39.70" y="13.76" font-size="12.6">分时</text></g>
<g fill="#f2f2f2" shape-rendering="geometricPrecision"><title>1分钟</title><text x="66.70 78.70" y="13.76" font-size="12.6">分钟</text><text x="64.0" y="13.32" font-size="12" text-anchor="middle">1</text></g>
<g fill="#f2f2f2" shape-rendering="geometricPrecision"><title>5分钟</title><text x="105.70 117.70" y="13.76" font-size="12.6">分钟</text><text x="103.0" y="13.32" font-size="12" text-anchor="middle">5</text></g>
<g fill="#f2f2f2" shape-rendering="geometricPrecision"><title>15分钟</title><text x="150.70 162.70" y="13.76" font-size="12.6">分钟</text><text x="142.0 148.0" y="13.32" font-size="12" text-anchor="middle">15</text></g>
<g fill="#f2f2f2" shape-rendering="geometricPrecision"><title>30分钟</title><text x="196.70 208.70" y="13.76" font-size="12.6">分钟</text><text x="188.0 194.0" y="13.32" font-size="12" text-anchor="middle">30</text></g>
<g fill="#f2f2f2" shape-rendering="geometricPrecision"><title>60分钟</title><text x="242.70 254.70" y="13.76" font-size="12.6">分钟</text><text x="234.0 240.0" y="13.32" font-size="12" text-anchor="middle">60</text></g>
<g fill="#00ffff" shape-rendering="geometricPrecision"><title>日线</title><text x="277.70 289.70" y="13.76" font-size="12.6">日线</text></g>
<g fill="#f2f2f2" shape-rendering="geometricPrecision"><title>周线</title><text x="311.70 323.70" y="13.76" font-size="12.6">周线</text></g>
<g fill="#f2f2f2" shape-rendering="geometricPrecision"><title>月线</title><text x="345.70 357.70" y="13.76" font-size="12.6">月线</text></g>
<g fill="#f2f2f2" shape-rendering="geometricPrecision"><title>多周期</title><text x="378.70 390.70 402.70" y="13.76" font-size="12.6">多周期</text></g>
<g fill="#f2f2f2" shape-rendering="geometricPrecision"><title>更多</title><text x="422.70 434.70" y="13.76" font-size="12.6">更多</text></g>
<polyline points="449,5.5 454.5,9.5 449,13.5" fill="none" stroke="#f2f2f2" stroke-width="1" shape-rendering="geometricPrecision"><title>&gt;</title></polyline>
<g fill="#f2f2f2" shape-rendering="geometricPrecision"><title>复权</title><text x="810.70 822.70" y="13.76" font-size="12.6">复权</text></g>
<g fill="#f2f2f2" shape-rendering="geometricPrecision"><title>叠加</title><text x="844.70 856.70" y="13.76" font-size="12.6">叠加</text></g>
<g fill="#f2f2f2" shape-rendering="geometricPrecision"><title>多股</title><text x="879.70 891.70" y="13.76" font-size="12.6">多股</text></g>
<g fill="#f2f2f2" shape-rendering="geometricPrecision"><title>统计</title><text x="913.70 925.70" y="13.76" font-size="12.6">统计</text></g>
<g fill="#f2f2f2" shape-rendering="geometricPrecision"><title>画线</title><text x="949.70 961.70" y="13.76" font-size="12.6">画线</text></g>
<g fill="#f2f2f2" shape-rendering="geometricPrecision"><title>F10</title><text x="990.8 997.2 1003.8" y="13.32" font-size="12" text-anchor="middle">F10</text></g>
<g fill="#f2f2f2" shape-rendering="geometricPrecision"><title>标记</title><text x="1019.70 1031.70" y="13.76" font-size="12.6">标记</text></g>
<g fill="#f2f2f2" shape-rendering="geometricPrecision"><title>+自选</title><text x="1058.70 1070.70" y="13.76" font-size="12.6">自选</text><text x="1056.0" y="13.32" font-size="12" text-anchor="middle">+</text></g>
<g fill="#f2f2f2" shape-rendering="geometricPrecision"><title>返回</title><text x="1090.70 1102.70" y="13.76" font-size="12.6">返回</text></g>
<g fill="#f2f2f2" shape-rendering="geometricPrecision"><title>重庆啤酒</title><text x="2.20 14.20 26.20 38.20" y="33.76" font-size="12.6">重庆啤酒</text></g>
<g fill="#f2f2f2" shape-rendering="geometricPrecision"><title>(</title><text x="54.0" y="33.32" font-size="12" text-anchor="middle">(</text></g>
<g fill="#f2f2f2" shape-rendering="geometricPrecision"><title>日线</title><text x="56.20 68.20" y="33.76" font-size="12.6">日线</text></g>
<g fill="#f2f2f2" shape-rendering="geometricPrecision"><title>.</title><text x="81.8" y="33.32" font-size="12" text-anchor="middle">.</text></g>
<g fill="#f2f2f2" shape-rendering="geometricPrecision"><title>前复权</title><text x="82.70 94.70 106.70" y="33.76" font-size="12.6">前复权</text></g>
<g fill="#f2f2f2" shape-rendering="geometricPrecision"><title>)</title><text x="120.5" y="33.32" font-size="12" text-anchor="middle">)</text></g>
<title>重庆啤酒(日线.前复权)</title>
<circle cx="134.3" cy="29.3" r="6" fill="#7d7d7d" shape-rendering="geometricPrecision"/>
<polyline points="131.3,28.1 134.3,31.1 137.3,28.1" fill="none" stroke="#151515" stroke-width="1.3" shape-rendering="geometricPrecision"/>
<rect x="1070" y="19" width="1" height="378" fill="#8b0000"/>
<rect x="1071" y="73" width="5" height="1" fill="#8b0000"/>
<text x="1085.5" y="77.6" font-size="12" fill="#cc0000">59.00</text>
<rect x="1071" y="112" width="5" height="1" fill="#8b0000"/>
<text x="1085.5" y="116.6" font-size="12" fill="#cc0000">58.00</text>
<rect x="1071" y="151" width="5" height="1" fill="#8b0000"/>
<text x="1085.5" y="155.6" font-size="12" fill="#cc0000">57.00</text>
<rect x="1071" y="190" width="5" height="1" fill="#8b0000"/>
<text x="1085.5" y="194.6" font-size="12" fill="#cc0000">56.00</text>
<rect x="1071" y="229" width="5" height="1" fill="#8b0000"/>
<text x="1085.5" y="233.6" font-size="12" fill="#cc0000">55.00</text>
<rect x="1071" y="268" width="5" height="1" fill="#8b0000"/>
<text x="1085.5" y="272.6" font-size="12" fill="#cc0000">54.00</text>
<rect x="1071" y="307" width="5" height="1" fill="#8b0000"/>
<text x="1085.5" y="311.6" font-size="12" fill="#cc0000">53.00</text>
<rect x="1071" y="346" width="5" height="1" fill="#8b0000"/>
<text x="1085.5" y="350.6" font-size="12" fill="#cc0000">52.00</text>
<rect x="1071" y="93" width="2" height="1" fill="#8b0000"/>
<rect x="1071" y="132" width="2" height="1" fill="#8b0000"/>
<rect x="1071" y="171" width="2" height="1" fill="#8b0000"/>
<rect x="1071" y="210" width="2" height="1" fill="#8b0000"/>
<rect x="1071" y="249" width="2" height="1" fill="#8b0000"/>
<rect x="1071" y="288" width="2" height="1" fill="#8b0000"/>
<rect x="1071" y="327" width="2" height="1" fill="#8b0000"/>
<rect x="0" y="396" width="1070" height="1" fill="#8b0000"/>
<rect x="1070" y="396" width="60" height="2" fill="#8b0000"/>
<rect x="1070" y="396" width="2" height="251" fill="#8b0000"/>
<rect x="1120" y="398" width="2" height="203" fill="#8b0000"/>
<rect x="1072" y="421" width="4" height="1" fill="#8b0000"/>
<text x="1085.5" y="425.6" font-size="12" fill="#cc0000">62.00</text>
<rect x="1072" y="458" width="4" height="1" fill="#8b0000"/>
<text x="1085.5" y="462.6" font-size="12" fill="#cc0000">60.00</text>
<rect x="1072" y="496" width="4" height="1" fill="#8b0000"/>
<text x="1085.5" y="500.6" font-size="12" fill="#cc0000">58.00</text>
<rect x="1072" y="534" width="4" height="1" fill="#8b0000"/>
<text x="1085.5" y="538.6" font-size="12" fill="#cc0000">56.00</text>
<rect x="1072" y="571" width="4" height="1" fill="#8b0000"/>
<text x="1085.5" y="575.6" font-size="12" fill="#cc0000">54.00</text>
<rect x="1072" y="609" width="4" height="1" fill="#8b0000"/>
<rect x="1072" y="440" width="1" height="1" fill="#8b0000"/>
<rect x="1072" y="477" width="1" height="1" fill="#8b0000"/>
<rect x="1072" y="515" width="1" height="1" fill="#8b0000"/>
<rect x="1072" y="552" width="1" height="1" fill="#8b0000"/>
<rect x="1072" y="590" width="1" height="1" fill="#8b0000"/>
<rect x="1072" y="628" width="1" height="1" fill="#8b0000"/>
<circle cx="8" cy="405" r="6" fill="#7d7d7d" shape-rendering="geometricPrecision"/>
<polyline points="5,403.8 8,406.8 11,403.8" fill="none" stroke="#151515" stroke-width="1.3" shape-rendering="geometricPrecision"/>
<g fill="#f2f2f2" shape-rendering="geometricPrecision"><title>股朋指标网</title><text x="17.70 29.70 41.70 53.70 65.70" y="409.76" font-size="12.6">股朋指标网</text></g>
<g fill="#ffffff" shape-rendering="geometricPrecision"><title>一: 56.67</title><text x="82.70" y="409.76" font-size="12.6">一</text><text x="95.00" y="409.32" font-size="12" xml:space="preserve">: 56.67</text></g>
<g fill="#ffff00" shape-rendering="geometricPrecision"><title>二: 57.27</title><text x="136.70" y="409.76" font-size="12.6">二</text><text x="149.00" y="409.32" font-size="12" xml:space="preserve">: 57.27</text></g>
<g fill="#ff00ff" shape-rendering="geometricPrecision"><title>三: 57.01</title><text x="190.70" y="409.76" font-size="12.6">三</text><text x="203.00" y="409.32" font-size="12" xml:space="preserve">: 57.01</text></g>
<g fill="#00ff00" shape-rendering="geometricPrecision"><title>四: 56.28</title><text x="245.70" y="409.76" font-size="12.6">四</text><text x="258.00" y="409.32" font-size="12" xml:space="preserve">: 56.28</text></g>
<g fill="#c0c0c0" shape-rendering="geometricPrecision"><title>五: 54.56</title><text x="298.70" y="409.76" font-size="12.6">五</text><text x="311.00" y="409.32" font-size="12" xml:space="preserve">: 54.56</text></g>
<g fill="#0000ff" shape-rendering="geometricPrecision"><title>六: 53.51</title><text x="352.70" y="409.76" font-size="12.6">六</text><text x="365.00" y="409.32" font-size="12" xml:space="preserve">: 53.51</text></g>
<g fill="#ffffff" shape-rendering="geometricPrecision"><title>七: 54.19</title><text x="407.20" y="409.76" font-size="12.6">七</text><text x="419.50" y="409.32" font-size="12" xml:space="preserve">: 54.19</text></g>
<rect x="0" y="630" width="1070" height="1" fill="#8b0000"/>
<rect x="0" y="646" width="1130" height="1" fill="#8b0000"/>
<rect x="153" y="630" width="1" height="17" fill="#8b0000"/>
<text x="154.8" y="643" font-size="12" fill="#cc0000">10</text>
<rect x="288" y="630" width="1" height="17" fill="#8b0000"/>
<text x="289.8" y="643" font-size="12" fill="#cc0000">11</text>
<rect x="446" y="630" width="1" height="17" fill="#8b0000"/>
<text x="447.8" y="643" font-size="12" fill="#cc0000">12</text>
<rect x="629" y="630" width="1" height="17" fill="#8b0000"/>
<text x="630.8" y="643" font-size="12" fill="#cc0000">1</text>
<rect x="787" y="630" width="1" height="17" fill="#8b0000"/>
<text x="788.8" y="643" font-size="12" fill="#cc0000">2</text>
<rect x="898" y="630" width="1" height="17" fill="#8b0000"/>
<text x="899.8" y="643" font-size="12" fill="#cc0000">3</text>
<rect x="187" y="631" width="1" height="2" fill="#8b0000"/>
<rect x="221" y="631" width="1" height="2" fill="#8b0000"/>
<rect x="254" y="631" width="1" height="2" fill="#8b0000"/>
<rect x="328" y="631" width="1" height="2" fill="#8b0000"/>
<rect x="367" y="631" width="1" height="2" fill="#8b0000"/>
<rect x="407" y="631" width="1" height="2" fill="#8b0000"/>
<rect x="492" y="631" width="1" height="2" fill="#8b0000"/>
<rect x="537" y="631" width="1" height="2" fill="#8b0000"/>
<rect x="583" y="631" width="1" height="2" fill="#8b0000"/>
<rect x="669" y="631" width="1" height="2" fill="#8b0000"/>
<rect x="708" y="631" width="1" height="2" fill="#8b0000"/>
<rect x="748" y="631" width="1" height="2" fill="#8b0000"/>
<rect x="815" y="631" width="1" height="2" fill="#8b0000"/>
<rect x="843" y="631" width="1" height="2" fill="#8b0000"/>
<rect x="870" y="631" width="1" height="2" fill="#8b0000"/>
<g fill="#cc0000" shape-rendering="geometricPrecision"><title>2025年</title><text x="29.90" y="643.76" font-size="12.6">年</text><text x="3.50" y="643.32" font-size="12" xml:space="preserve">2025</text></g>
<rect x="0" y="647" width="1" height="3" fill="#8b0000"/>
<rect x="42" y="647" width="1" height="3" fill="#8b0000"/>
<rect x="73" y="647" width="1" height="3" fill="#8b0000"/>
<rect x="115" y="647" width="1" height="3" fill="#8b0000"/>
<rect x="144" y="647" width="1" height="3" fill="#8b0000"/>
<rect x="177" y="647" width="1" height="3" fill="#8b0000"/>
<rect x="207" y="647" width="1" height="3" fill="#8b0000"/>
<rect x="241" y="647" width="1" height="3" fill="#8b0000"/>
<rect x="283" y="647" width="1" height="3" fill="#8b0000"/>
<rect x="308" y="647" width="1" height="3" fill="#8b0000"/>
<rect x="332" y="647" width="1" height="3" fill="#8b0000"/>
<rect x="365" y="647" width="1" height="3" fill="#8b0000"/>
<rect x="390" y="647" width="1" height="3" fill="#8b0000"/>
<rect x="423" y="647" width="1" height="3" fill="#8b0000"/>
<rect x="449" y="647" width="1" height="3" fill="#8b0000"/>
<rect x="480" y="647" width="1" height="3" fill="#8b0000"/>
<rect x="509" y="647" width="1" height="3" fill="#8b0000"/>
<rect x="536" y="647" width="1" height="3" fill="#8b0000"/>
<rect x="568" y="647" width="1" height="3" fill="#8b0000"/>
<rect x="599" y="647" width="1" height="3" fill="#8b0000"/>
<rect x="628" y="647" width="1" height="3" fill="#8b0000"/>
<rect x="663" y="647" width="1" height="3" fill="#8b0000"/>
<rect x="696" y="647" width="1" height="3" fill="#8b0000"/>
<rect x="735" y="647" width="1" height="3" fill="#8b0000"/>
<rect x="766" y="647" width="1" height="3" fill="#8b0000"/>
<rect x="807" y="647" width="1" height="3" fill="#8b0000"/>
<rect x="839" y="647" width="1" height="3" fill="#8b0000"/>
<rect x="871" y="647" width="1" height="3" fill="#8b0000"/>
<rect x="8" y="649" width="2" height="1" fill="#e0e0e0"/>
<rect x="12" y="649" width="1" height="1" fill="#e0e0e0"/>
<rect x="16" y="649" width="1" height="1" fill="#e0e0e0"/>
<rect x="19" y="649" width="2" height="1" fill="#e0e0e0"/>
<rect x="50" y="649" width="2" height="1" fill="#e0e0e0"/>
<rect x="828" y="649" width="1" height="1" fill="#e0e0e0"/>
<rect x="846" y="648" width="3" height="2" fill="#00ffff"/>
<rect x="852" y="648" width="5" height="2" fill="#00ffff"/>
<rect x="859" y="648" width="6" height="2" fill="#00ffff"/>
<rect x="1121" y="25" width="9" height="1" fill="#8b0000"/>
<rect x="1121" y="45" width="9" height="1" fill="#8b0000"/>
<rect x="1121" y="142" width="9" height="1" fill="#8b0000"/>
<rect x="1121" y="239" width="9" height="1" fill="#8b0000"/>
<rect x="1121" y="336" width="9" height="1" fill="#8b0000"/>
<rect x="1121" y="418" width="9" height="1" fill="#8b0000"/>
<rect x="1121" y="437" width="9" height="2" fill="#8b0000"/>
<g fill="#ffffff" clip-path="url(#cpStrip)" shape-rendering="geometricPrecision"><text x="1123.25" y="40.35" font-size="15.5">委</text></g>
<g fill="#ffffff" clip-path="url(#cpStrip)" shape-rendering="geometricPrecision"><text x="1123.25" y="62.35" font-size="15.5">卖</text></g>
<g fill="#ffffff" clip-path="url(#cpStrip)" shape-rendering="geometricPrecision"><text x="1123.25" y="81.35" font-size="15.5">卖</text></g>
<g fill="#ffffff" clip-path="url(#cpStrip)" shape-rendering="geometricPrecision"><text x="1123.25" y="100.35" font-size="15.5">卖</text></g>
<g fill="#ffffff" clip-path="url(#cpStrip)" shape-rendering="geometricPrecision"><text x="1123.25" y="119.35" font-size="15.5">卖</text></g>
<g fill="#ffffff" clip-path="url(#cpStrip)" shape-rendering="geometricPrecision"><text x="1123.25" y="138.35" font-size="15.5">卖</text></g>
<g fill="#ffffff" clip-path="url(#cpStrip)" shape-rendering="geometricPrecision"><text x="1123.25" y="158.35" font-size="15.5">买</text></g>
<g fill="#ffffff" clip-path="url(#cpStrip)" shape-rendering="geometricPrecision"><text x="1123.25" y="176.35" font-size="15.5">买</text></g>
<g fill="#ffffff" clip-path="url(#cpStrip)" shape-rendering="geometricPrecision"><text x="1123.25" y="195.35" font-size="15.5">买</text></g>
<g fill="#ffffff" clip-path="url(#cpStrip)" shape-rendering="geometricPrecision"><text x="1123.25" y="213.35" font-size="15.5">买</text></g>
<g fill="#ffffff" clip-path="url(#cpStrip)" shape-rendering="geometricPrecision"><text x="1123.25" y="232.35" font-size="15.5">买</text></g>
<g fill="#ffffff" clip-path="url(#cpStrip)" shape-rendering="geometricPrecision"><text x="1123.25" y="257.35" font-size="15.5">现</text></g>
<g fill="#ffffff" clip-path="url(#cpStrip)" shape-rendering="geometricPrecision"><text x="1123.25" y="276.35" font-size="15.5">涨</text></g>
<g fill="#ffffff" clip-path="url(#cpStrip)" shape-rendering="geometricPrecision"><text x="1123.25" y="295.35" font-size="15.5">涨</text></g>
<g fill="#ffffff" clip-path="url(#cpStrip)" shape-rendering="geometricPrecision"><text x="1123.25" y="313.35" font-size="15.5">总</text></g>
<g fill="#ffffff" clip-path="url(#cpStrip)" shape-rendering="geometricPrecision"><text x="1123.25" y="332.35" font-size="15.5">外</text></g>
<g fill="#ffffff" clip-path="url(#cpStrip)" shape-rendering="geometricPrecision"><text x="1123.25" y="353.35" font-size="15.5">换</text></g>
<g fill="#ffffff" clip-path="url(#cpStrip)" shape-rendering="geometricPrecision"><text x="1123.25" y="372.35" font-size="15.5">净</text></g>
<g fill="#ffffff" clip-path="url(#cpStrip)" shape-rendering="geometricPrecision"><text x="1123.25" y="392.35" font-size="15.5">收</text></g>
<g fill="#e6e600" clip-path="url(#cpStrip)" shape-rendering="geometricPrecision"><text x="1123.25" y="413.35" font-size="15.5">自</text></g>
<g fill="#ffffff" clip-path="url(#cpStrip)" shape-rendering="geometricPrecision"><text x="1123.25" y="433.35" font-size="15.5">交</text></g>
<text x="1122.5" y="452.0" font-size="13.5" font-weight="bold" fill="#fff">1</text>
<text x="1122.5" y="469.8" font-size="13.5" font-weight="bold" fill="#fff">1</text>
<text x="1122.5" y="487.5" font-size="13.5" font-weight="bold" fill="#fff">1</text>
<text x="1122.5" y="505.2" font-size="13.5" font-weight="bold" fill="#fff">1</text>
<text x="1122.5" y="523.0" font-size="13.5" font-weight="bold" fill="#fff">1</text>
<text x="1122.5" y="540.8" font-size="13.5" font-weight="bold" fill="#fff">1</text>
<text x="1122.5" y="558.5" font-size="13.5" font-weight="bold" fill="#fff">1</text>
<text x="1122.5" y="576.2" font-size="13.5" font-weight="bold" fill="#fff">1</text>
<text x="1122.5" y="594.0" font-size="13.5" font-weight="bold" fill="#fff">1</text>
<rect x="971" y="600" width="159" height="50" fill="#3d3838"/>
<g fill="#ffffff" shape-rendering="geometricPrecision"><title>指标公式网</title><text x="1005.70 1023.70 1041.70 1059.70 1077.70" y="622.02" font-size="18.6" font-weight="bold">指标公式网</text></g>
<text x="1053.5" y="640.8" font-size="15" letter-spacing="0.65" text-anchor="middle" fill="#eef2ff" shape-rendering="geometricPrecision">www.zbgs3.com</text>
</svg>
</body></html>
